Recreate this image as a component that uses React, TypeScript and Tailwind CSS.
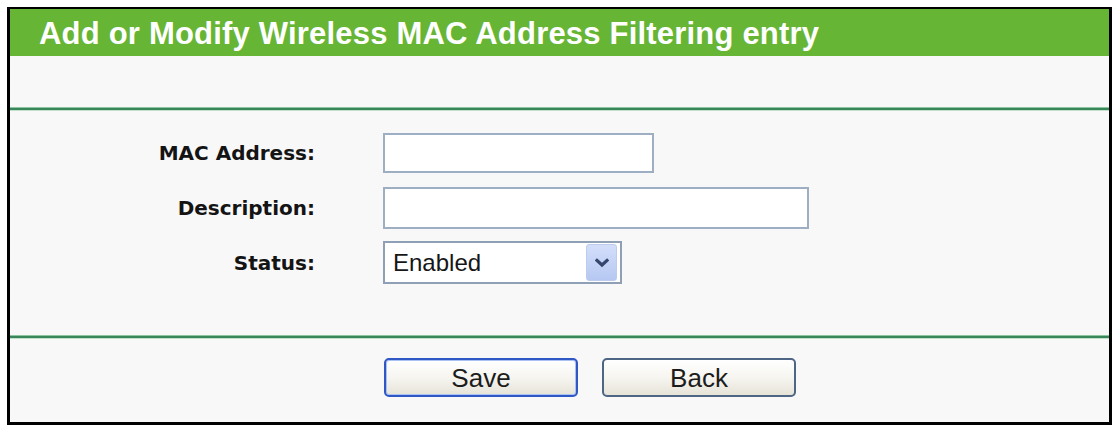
import React from "react";

function Chevron() {
  return (
    <svg width="14" height="10" viewBox="0 0 14 10">
      <path d="M2 2.5 L7 7 L12 2.5" fill="none" stroke="#34466d" strokeWidth="3.2" strokeLinecap="square" />
    </svg>
  );
}

function GreenLine() {
  return (
    <div className="flex flex-col">
      <div className="h-px bg-[#8cc5a0]" />
      <div className="h-[2px] bg-[#39865a]" />
      <div className="h-px bg-[#c2e0cc]" />
    </div>
  );
}

export default function App() {
  const labelCls =
    "w-[305px] shrink-0 text-right font-bold text-[20px] text-[#141414] font-['DejaVu_Sans',sans-serif] flex items-center justify-end";
  return (
    <div className="bg-white w-[1115px] h-[429px] pt-[7px] pl-[7px]">
      <div className="w-[1105px] h-[418px] border-t-2 border-x-[3px] border-b-[3px] border-black bg-[#f8f8f9] flex flex-col">
        <div className="h-[47px] bg-[#67b534] flex items-center pl-[29px] pt-[1px]">
          <span className="text-white font-bold text-[31px] font-['Liberation_Sans',Arial,sans-serif] leading-none tracking-[0.2px]">
            Add or Modify Wireless MAC Address Filtering entry
          </span>
        </div>
        <div className="h-[51px]" />
        <GreenLine />
        <div className="h-[224px] pt-[22px] flex flex-col">
          <div className="flex gap-[68px] h-[40px]">
            <div className={labelCls}>MAC Address:</div>
            <div className="h-[40px] w-[271px] border-2 border-[#9eafc3] bg-white" />
          </div>
          <div className="flex gap-[68px] h-[42px] mt-[14px]">
            <div className={labelCls}>Description:</div>
            <div className="h-[42px] w-[426px] border-2 border-[#9eafc3] bg-white" />
          </div>
          <div className="flex gap-[68px] h-[43px] mt-[12px]">
            <div className={labelCls}>Status:</div>
            <div className="h-[43px] w-[239px] border-2 border-[#8e9fb6] bg-white flex items-center justify-between pr-[3px] pl-[8px]">
              <span className="text-[24px] text-[#161616] font-['Liberation_Sans',Arial,sans-serif] leading-none">
                Enabled
              </span>
              <div className="w-[31px] h-[37px] rounded-[3px] border border-[#bccbee] bg-gradient-to-b from-[#d3defa] to-[#b6c8f2] flex items-center justify-center">
                <Chevron />
              </div>
            </div>
          </div>
        </div>
        <GreenLine />
        <div className="flex-1 pl-[374px] pt-[19px] flex gap-[24px] items-start">
          <button className="w-[194px] h-[39px] rounded-[5px] border-2 border-[#2f58c4] bg-gradient-to-b from-white via-[#f6f5f0] to-[#e6e3d8] shadow-[inset_0_0_0_1px_#a9c2f3] flex items-center justify-center text-[26px] text-[#1c1c1c] font-['Liberation_Sans',Arial,sans-serif] leading-none">
            Save
          </button>
          <button className="w-[194px] h-[39px] rounded-[5px] border-2 border-[#4f6585] bg-gradient-to-b from-white via-[#f6f5f0] to-[#e6e3d8] flex items-center justify-center text-[26px] text-[#1c1c1c] font-['Liberation_Sans',Arial,sans-serif] leading-none">
            Back
          </button>
        </div>
      </div>
    </div>
  );
}
